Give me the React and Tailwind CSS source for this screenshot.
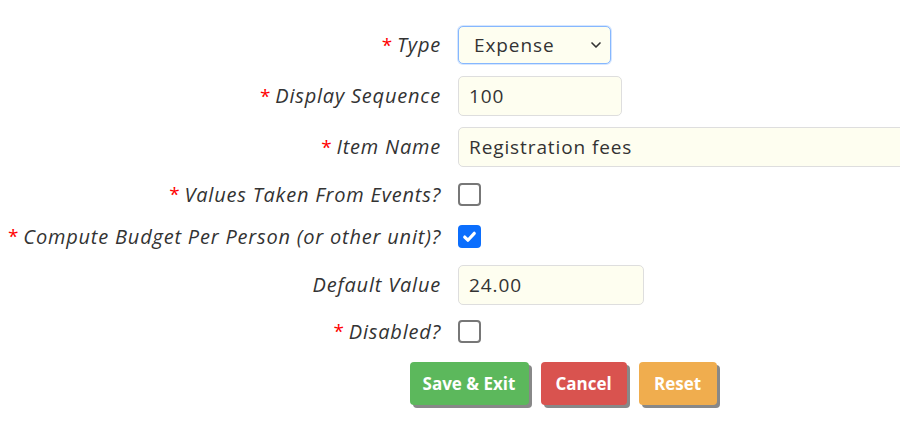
import { ChevronDown } from 'lucide-react';

const font = { fontFamily: '"Open Sans", "Noto Sans", sans-serif' };

const Label = ({ required, children }) => (
  <div className="flex items-center justify-end text-[20px] tracking-[0.8px] italic text-[#333] leading-none">
    {required && <span className="text-[#f00] mr-[4px] not-italic text-[19px]">*</span>}
    <span>{children}</span>
  </div>
);

const Checkbox = ({ checked }) =>
  checked ? (
    <div className="w-[23px] h-[23px] rounded-[4px] bg-[#0b6efd] flex items-center justify-center">
      <svg viewBox="0 0 16 16" className="w-[17px] h-[17px]">
        <path d="M3.5 8.5l3 3 6-6.5" fill="none" stroke="white" strokeWidth="3" strokeLinecap="round" strokeLinejoin="round" />
      </svg>
    </div>
  ) : (
    <div className="w-[23px] h-[23px] rounded-[4px] border-2 border-[#777] bg-white" />
  );

const inputCls =
  'h-[40px] rounded-[5px] border border-[#dedede] bg-[#fefef0] px-[10px] flex items-center text-[19px] tracking-[0.9px] text-[#333]';

export default function App() {
  return (
    <div className="w-[900px] h-[444px] bg-white overflow-hidden" style={font}>
      <div className="grid grid-cols-[441px_1fr] gap-x-[17px] pt-[26px]">
        <Label required>Type</Label>
        <div className="h-[38px] w-[153px] rounded-[5px] border border-[#86b7fe] bg-[#fefef0] shadow-[0_0_0_1px_rgba(134,183,254,0.35)] flex items-center justify-between pl-[15px] pr-[6px] text-[19px] tracking-[0.9px] text-[#333]">
          <span>Expense</span>
          <ChevronDown className="w-[16px] h-[16px] text-[#333]" strokeWidth={2.5} />
        </div>

        <div className="col-span-2 h-[12px]" />
        <Label required>Display Sequence</Label>
        <div className={`${inputCls} w-[164px]`}>100</div>

        <div className="col-span-2 h-[11px]" />
        <Label required>Item Name</Label>
        <div className={`${inputCls} w-[460px]`}>Registration fees</div>

        <div className="col-span-2 h-[15px]" />
        <Label required>Values Taken From Events?</Label>
        <div className="h-[25px] flex items-center"><Checkbox /></div>

        <div className="col-span-2 h-[17px]" />
        <Label required>Compute Budget Per Person (or other unit)?</Label>
        <div className="h-[25px] flex items-center"><Checkbox checked /></div>

        <div className="col-span-2 h-[16px]" />
        <Label>Default Value</Label>
        <div className={`${inputCls} w-[186px]`}>24.00</div>

        <div className="col-span-2 h-[14px]" />
        <Label required>Disabled?</Label>
        <div className="h-[25px] flex items-center"><Checkbox /></div>
      </div>

      <div className="flex justify-center gap-[12px] pl-[226px] mt-[18px] font-bold text-[17px] text-white">
        <button className="h-[43px] w-[119px] rounded-[4px] bg-[#5cb85c] shadow-[3px_3px_0_#888]">Save &amp; Exit</button>
        <button className="h-[43px] w-[86px] rounded-[4px] bg-[#d9534f] shadow-[3px_3px_0_#888]">Cancel</button>
        <button className="h-[43px] w-[78px] rounded-[4px] bg-[#f0ad4e] shadow-[3px_3px_0_#888]">Reset</button>
      </div>
    </div>
  );
}
